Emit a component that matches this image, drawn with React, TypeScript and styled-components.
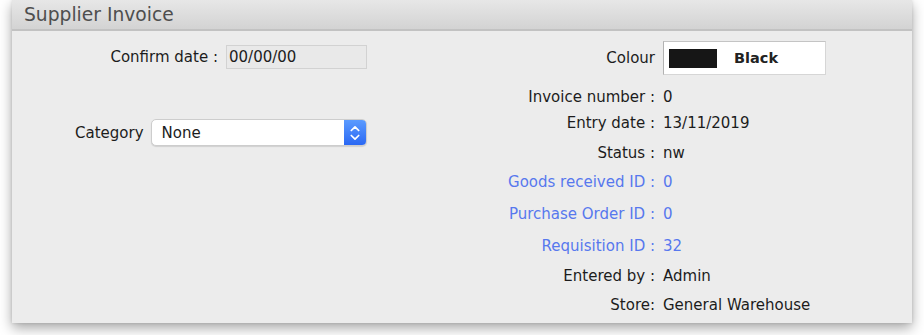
import { Component, ReactNode } from "react";
import styled, { createGlobalStyle } from "styled-components";

const GlobalStyle = createGlobalStyle`
  body {
    margin: 0;
    background: #ffffff;
    font-family: "DejaVu Sans", "Liberation Sans", sans-serif;
  }
`;

const Page = styled.div`
  width: 924px;
  height: 335px;
  overflow: hidden;
`;

const Window = styled.div`
  margin: 0 12px;
  width: 900px;
  height: 323px;
  background: #ececec;
  box-shadow: 0 5px 12px rgba(0, 0, 0, 0.35), 0 0 3px rgba(0, 0, 0, 0.12);
  display: flex;
  flex-direction: column;
`;

const TitleBar = styled.div`
  height: 29px;
  flex: none;
  background: linear-gradient(#e7e7e7, #d3d3d3);
  border-bottom: 2px solid #c2c2c2;
  display: flex;
  align-items: center;
  padding-left: 12px;
  font-size: 18.7px;
  color: #4e4e4e;
`;

const Body = styled.div`
  display: grid;
  grid-template-columns: 355px 1fr;
  flex: 1;
`;

const LeftPane = styled.div`
  display: flex;
  flex-direction: column;
  padding-top: 14px;
`;

const ConfirmRow = styled.div`
  display: flex;
  justify-content: flex-end;
  align-items: center;
  gap: 8px;
`;

const CategoryRow = styled.div`
  display: flex;
  align-items: center;
  gap: 7px;
  margin-top: 50px;
  padding-left: 63px;
`;

const Label = styled.span<{ $link?: boolean }>`
  font-size: 15px;
  line-height: 20px;
  color: ${(p) => (p.$link ? "#5778ee" : "#1c1c1c")};
  white-space: nowrap;
`;

const DateField = styled.div`
  width: 137px;
  height: 22px;
  border: 1px solid #d2d2d2;
  background: #e9e9e9;
  font-size: 15px;
  line-height: 22px;
  padding-left: 2px;
  color: #1c1c1c;
`;

const Select = styled.div`
  width: 216px;
  height: 27px;
  box-sizing: border-box;
  border: 1px solid #cdcdcd;
  border-radius: 5px;
  background: #ffffff;
  box-shadow: 0 1px 1px rgba(0, 0, 0, 0.12);
  display: flex;
  align-items: center;
  overflow: hidden;
`;

const SelectText = styled.span`
  flex: 1;
  padding-left: 10px;
  font-size: 15px;
  color: #1c1c1c;
`;

const Stepper = styled.div`
  width: 22px;
  height: 100%;
  background: linear-gradient(#5b9bff, #2a68f3);
  display: flex;
  align-items: center;
  justify-content: center;
`;

const RightPane = styled.div`
  display: grid;
  grid-template-columns: 288px 1fr;
  column-gap: 8px;
  align-content: start;
  padding-top: 10px;
`;

const Row = styled.div<{ $space: number }>`
  display: contents;
  & > * {
    margin-top: ${(p) => p.$space}px;
  }
`;

const RowLabel = styled(Label)`
  text-align: right;
  align-self: center;
`;

const Value = styled(Label)`
  align-self: center;
`;

const ColourBox = styled.div`
  width: 163px;
  height: 34px;
  box-sizing: border-box;
  background: #ffffff;
  border: 1px solid #d6d6d6;
  border-left-color: #b2b2b2;
  border-top-color: #c4c4c4;
  display: flex;
  align-items: center;
  padding-left: 5px;
  gap: 17px;
`;

const Swatch = styled.div`
  width: 48px;
  height: 19px;
  background: #161616;
`;

const ColourName = styled.span`
  font-size: 14.5px;
  font-weight: bold;
  color: #222222;
`;

const rows: { label: string; value: string; link?: boolean; space: number }[] = [
  { label: "Invoice number :", value: "0", space: 12 },
  { label: "Entry date :", value: "13/11/2019", space: 6 },
  { label: "Status :", value: "nw", space: 10 },
  { label: "Goods received ID :", value: "0", link: true, space: 9 },
  { label: "Purchase Order ID :", value: "0", link: true, space: 12 },
  { label: "Requisition ID :", value: "32", link: true, space: 12 },
  { label: "Entered by :", value: "Admin", space: 10 },
  { label: "Store:", value: "General Warehouse", space: 9 },
];

class Chevrons extends Component {
  render(): ReactNode {
    return (
      <svg width="12" height="20" viewBox="0 0 12 20">
        <path
          d="M2.3 7.5 L6 3.8 L9.7 7.5 M2.3 12.5 L6 16.2 L9.7 12.5"
          fill="none"
          stroke="#ffffff"
          strokeWidth="1.7"
          strokeLinecap="round"
          strokeLinejoin="round"
        />
      </svg>
    );
  }
}

export default class App extends Component {
  render(): ReactNode {
    return (
      <Page>
        <GlobalStyle />
        <Window>
          <TitleBar>Supplier Invoice</TitleBar>
          <Body>
            <LeftPane>
              <ConfirmRow>
                <Label>Confirm date :</Label>
                <DateField>00/00/00</DateField>
              </ConfirmRow>
              <CategoryRow>
                <Label>Category</Label>
                <Select>
                  <SelectText>None</SelectText>
                  <Stepper>
                    <Chevrons />
                  </Stepper>
                </Select>
              </CategoryRow>
            </LeftPane>
            <RightPane>
              <Row $space={0}>
                <RowLabel>Colour</RowLabel>
                <ColourBox>
                  <Swatch />
                  <ColourName>Black</ColourName>
                </ColourBox>
              </Row>
              {rows.map((r) => (
                <Row key={r.label} $space={r.space}>
                  <RowLabel $link={r.link}>{r.label}</RowLabel>
                  <Value $link={r.link}>{r.value}</Value>
                </Row>
              ))}
            </RightPane>
          </Body>
        </Window>
      </Page>
    );
  }
}
